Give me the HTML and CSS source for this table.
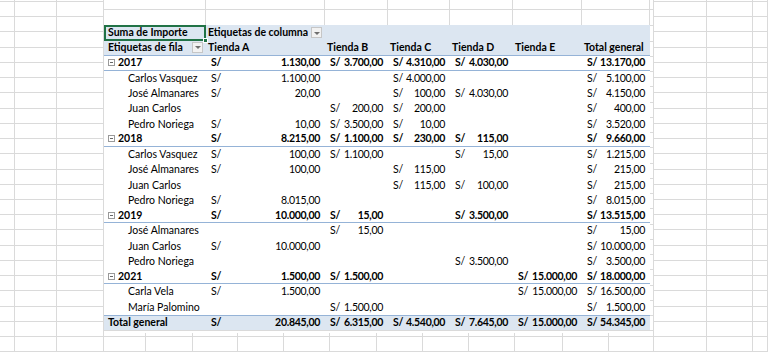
FILE: index.html
```html
<!DOCTYPE html>
<html lang="es">
<head>
<meta charset="utf-8">
<title>Tabla dinámica</title>
<link rel="stylesheet" href="styles.css">
</head>
<body>
<div class="sheet">
  <div class="cols">
    <span></span><span></span><span></span><span></span><span></span><span></span><span></span><span></span><span></span><span></span><span></span><span></span><span></span><span></span><span></span><span></span><span></span><span></span>
  </div>
  <div class="layer">
    <div class="snapshot">
      <div class="topstrip">
        <div class="ts-row ts-a"><span></span><span></span><span></span><span></span><span></span><span></span><span></span></div>
        <div class="ts-row ts-b"><span></span><span></span><span></span><span></span><span></span><span></span><span></span></div>
      </div>
      <div class="pivot">
        <div class="row head">
          <div class="c b sel">Suma de Importe<i class="handle"></i></div>
          <div class="c b drop">Etiquetas de columna<span class="dd"></span></div>
          <div></div><div></div><div></div><div></div><div></div>
        </div>
        <div class="row head head2">
          <div class="c b drop">Etiquetas de fila<span class="dd"></span></div>
          <div class="c b">Tienda A</div>
          <div class="c b">Tienda B</div>
          <div class="c b">Tienda C</div>
          <div class="c b">Tienda D</div>
          <div class="c b">Tienda E</div>
          <div class="c b">Total general</div>
        </div>

        <div class="row year">
          <div class="c yl"><span class="tog"></span>2017</div>
          <div class="v"><span>S/</span><span>1.130,00</span></div>
          <div class="v"><span>S/</span><span>3.700,00</span></div>
          <div class="v"><span>S/</span><span>4.310,00</span></div>
          <div class="v"><span>S/</span><span>4.030,00</span></div>
          <div></div>
          <div class="v"><span>S/</span><span>13.170,00</span></div>
        </div>
        <div class="row">
          <div class="c nm">Carlos Vasquez</div>
          <div class="v"><span>S/</span><span>1.100,00</span></div>
          <div></div>
          <div class="v"><span>S/</span><span>4.000,00</span></div>
          <div></div><div></div>
          <div class="v"><span>S/</span><span>5.100,00</span></div>
        </div>
        <div class="row">
          <div class="c nm">José Almanares</div>
          <div class="v"><span>S/</span><span>20,00</span></div>
          <div></div>
          <div class="v"><span>S/</span><span>100,00</span></div>
          <div class="v"><span>S/</span><span>4.030,00</span></div>
          <div></div>
          <div class="v"><span>S/</span><span>4.150,00</span></div>
        </div>
        <div class="row">
          <div class="c nm">Juan Carlos</div>
          <div></div>
          <div class="v"><span>S/</span><span>200,00</span></div>
          <div class="v"><span>S/</span><span>200,00</span></div>
          <div></div><div></div>
          <div class="v"><span>S/</span><span>400,00</span></div>
        </div>
        <div class="row">
          <div class="c nm">Pedro Noriega</div>
          <div class="v"><span>S/</span><span>10,00</span></div>
          <div class="v"><span>S/</span><span>3.500,00</span></div>
          <div class="v"><span>S/</span><span>10,00</span></div>
          <div></div><div></div>
          <div class="v"><span>S/</span><span>3.520,00</span></div>
        </div>

        <div class="row year">
          <div class="c yl"><span class="tog"></span>2018</div>
          <div class="v"><span>S/</span><span>8.215,00</span></div>
          <div class="v"><span>S/</span><span>1.100,00</span></div>
          <div class="v"><span>S/</span><span>230,00</span></div>
          <div class="v"><span>S/</span><span>115,00</span></div>
          <div></div>
          <div class="v"><span>S/</span><span>9.660,00</span></div>
        </div>
        <div class="row">
          <div class="c nm">Carlos Vasquez</div>
          <div class="v"><span>S/</span><span>100,00</span></div>
          <div class="v"><span>S/</span><span>1.100,00</span></div>
          <div></div>
          <div class="v"><span>S/</span><span>15,00</span></div>
          <div></div>
          <div class="v"><span>S/</span><span>1.215,00</span></div>
        </div>
        <div class="row">
          <div class="c nm">José Almanares</div>
          <div class="v"><span>S/</span><span>100,00</span></div>
          <div></div>
          <div class="v"><span>S/</span><span>115,00</span></div>
          <div></div><div></div>
          <div class="v"><span>S/</span><span>215,00</span></div>
        </div>
        <div class="row">
          <div class="c nm">Juan Carlos</div>
          <div></div><div></div>
          <div class="v"><span>S/</span><span>115,00</span></div>
          <div class="v"><span>S/</span><span>100,00</span></div>
          <div></div>
          <div class="v"><span>S/</span><span>215,00</span></div>
        </div>
        <div class="row">
          <div class="c nm">Pedro Noriega</div>
          <div class="v"><span>S/</span><span>8.015,00</span></div>
          <div></div><div></div><div></div><div></div>
          <div class="v"><span>S/</span><span>8.015,00</span></div>
        </div>

        <div class="row year">
          <div class="c yl"><span class="tog"></span>2019</div>
          <div class="v"><span>S/</span><span>10.000,00</span></div>
          <div class="v"><span>S/</span><span>15,00</span></div>
          <div></div>
          <div class="v"><span>S/</span><span>3.500,00</span></div>
          <div></div>
          <div class="v"><span>S/</span><span>13.515,00</span></div>
        </div>
        <div class="row">
          <div class="c nm">José Almanares</div>
          <div></div>
          <div class="v"><span>S/</span><span>15,00</span></div>
          <div></div><div></div><div></div>
          <div class="v"><span>S/</span><span>15,00</span></div>
        </div>
        <div class="row">
          <div class="c nm">Juan Carlos</div>
          <div class="v"><span>S/</span><span>10.000,00</span></div>
          <div></div><div></div><div></div><div></div>
          <div class="v"><span>S/</span><span>10.000,00</span></div>
        </div>
        <div class="row">
          <div class="c nm">Pedro Noriega</div>
          <div></div><div></div><div></div>
          <div class="v"><span>S/</span><span>3.500,00</span></div>
          <div></div>
          <div class="v"><span>S/</span><span>3.500,00</span></div>
        </div>

        <div class="row year">
          <div class="c yl"><span class="tog"></span>2021</div>
          <div class="v"><span>S/</span><span>1.500,00</span></div>
          <div class="v"><span>S/</span><span>1.500,00</span></div>
          <div></div><div></div>
          <div class="v"><span>S/</span><span>15.000,00</span></div>
          <div class="v"><span>S/</span><span>18.000,00</span></div>
        </div>
        <div class="row">
          <div class="c nm">Carla Vela</div>
          <div class="v"><span>S/</span><span>1.500,00</span></div>
          <div></div><div></div><div></div>
          <div class="v"><span>S/</span><span>15.000,00</span></div>
          <div class="v"><span>S/</span><span>16.500,00</span></div>
        </div>
        <div class="row">
          <div class="c nm">María Palomino</div>
          <div></div>
          <div class="v"><span>S/</span><span>1.500,00</span></div>
          <div></div><div></div><div></div>
          <div class="v"><span>S/</span><span>1.500,00</span></div>
        </div>

        <div class="row total">
          <div class="c tl">Total general</div>
          <div class="v"><span>S/</span><span>20.845,00</span></div>
          <div class="v"><span>S/</span><span>6.315,00</span></div>
          <div class="v"><span>S/</span><span>4.540,00</span></div>
          <div class="v"><span>S/</span><span>7.645,00</span></div>
          <div class="v"><span>S/</span><span>15.000,00</span></div>
          <div class="v"><span>S/</span><span>54.345,00</span></div>
        </div>
      </div>
    </div>
  </div>
</div>
</body>
</html>
```

FILE: styles.css
```css
* { box-sizing: border-box; }

html, body { margin: 0; padding: 0; background: #fff; }

body {
  font-family: Lato, "Open Sans", "Liberation Sans", sans-serif;
  font-size: 10.5px;
  color: #000;
}

.sheet {
  width: 768px;
  height: 352px;
  display: grid;
  overflow: hidden;
  background-color: #fff;
  background-image: repeating-linear-gradient(to bottom, #dadada 0, #dadada 1px, transparent 1px, transparent 15.23px);
  background-position: 0 1px;
}

.cols {
  grid-area: 1 / 1;
  display: grid;
  grid-template-columns: 15px 42px 47px 42px 47px 45px 46px 46px 47px 46px 46px 46px 48px 46px 45px 53px 46px 1fr;
}

.cols span { border-right: 1px solid #dadada; }

.layer {
  grid-area: 1 / 1;
  padding-left: 104px;
}

.snapshot {
  width: 549px;
  height: 333px;
  background-color: #fff;
  background-image: repeating-linear-gradient(to bottom, #dadada 0, #dadada 1px, transparent 1px, transparent 15.26px);
  background-position: 0 9.7px;
  background-repeat: repeat-x;
}

.topstrip { height: 25px; background: #fff; }

.ts-row {
  display: grid;
  grid-template-columns: 102px 119px 63px 62px 63px 69px 68px;
}

.ts-row span { border-right: 1px solid #dadada; }
.ts-a { height: 9.7px; border-bottom: 1px solid #dadada; }
.ts-b { height: 15.3px; }

.pivot { width: 546px; background: #fff; }

.row {
  display: grid;
  grid-template-columns: 102px 119px 63px 62px 63px 69px 68px;
  height: 15.26px;
  align-items: center;
  white-space: nowrap;
  line-height: 13px;
}

.c { padding-left: 2px; }
.b { font-weight: bold; }

.head { background: #dce6f1; }
.head2 { border-bottom: 1px solid #95b3d7; }

.sel {
  position: relative;
  height: 100%;
  display: flex;
  align-items: center;
  padding-left: 4px;
}

.sel::after {
  content: "";
  position: absolute;
  left: 0;
  top: 0;
  right: 0;
  bottom: -1px;
  border: 2px solid #217346;
}

.handle {
  position: absolute;
  right: -2px;
  bottom: -3px;
  width: 5px;
  height: 5px;
  background: #217346;
  border: 1px solid #fff;
  z-index: 2;
}

.drop {
  display: flex;
  justify-content: space-between;
  align-items: center;
  padding-right: 3px;
}

.head2 .drop { padding-left: 4px; }

.dd {
  width: 11px;
  height: 11px;
  background: #f2f2f2;
  border: 1px solid #c6c6c6;
  position: relative;
  flex: none;
}

.dd::after {
  content: "";
  position: absolute;
  left: 2px;
  top: 3.5px;
  border-left: 3px solid transparent;
  border-right: 3px solid transparent;
  border-top: 3px solid #6f6f6f;
}

.year { font-weight: bold; border-bottom: 1px solid #95b3d7; }

.yl { display: flex; align-items: center; padding-left: 4px; }

.tog {
  width: 7px;
  height: 7px;
  border: 1px solid #9a9a9a;
  margin-right: 3px;
  position: relative;
  flex: none;
}

.tog::after {
  content: "";
  position: absolute;
  left: 1px;
  top: 2px;
  width: 3px;
  height: 1px;
  background: #666;
}

.nm { padding-left: 24px; }
.tl { padding-left: 4px; }

.v {
  display: flex;
  justify-content: space-between;
  gap: 3px;
  padding: 0 5px 0 5px;
  letter-spacing: -0.3px;
}

.total {
  background: #dce6f1;
  border-top: 1px solid #95b3d7;
  font-weight: bold;
}
```
